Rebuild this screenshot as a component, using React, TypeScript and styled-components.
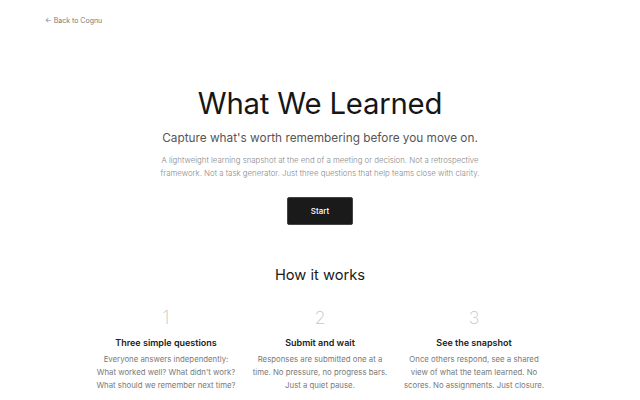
import React from "react";
import styled, { createGlobalStyle } from "styled-components";

const GlobalStyle = createGlobalStyle`
  html, body {
    margin: 0;
    padding: 0;
    background: #ffffff;
  }
  body {
    font-family: Inter, "Noto Sans", Arial, sans-serif;
    color: #1a1a1a;
    -webkit-font-smoothing: antialiased;
  }
`;

const steps = [
  {
    n: "1",
    title: "Three simple questions",
    text: "Everyone answers independently: What worked well? What didn't work? What should we remember next time?",
  },
  {
    n: "2",
    title: "Submit and wait",
    text: "Responses are submitted one at a time. No pressure, no progress bars. Just a quiet pause.",
  },
  {
    n: "3",
    title: "See the snapshot",
    text: "Once others respond, see a shared view of what the team learned. No scores. No assignments. Just closure.",
  },
];

const Page = () => {
  return (
    <>
      <GlobalStyle />
      <Wrap>
        <TopBar>
          <BackLink href="#">← Back to Cognu</BackLink>
        </TopBar>
        <Hero>
          <Title>What We Learned</Title>
          <Subtitle>Capture what's worth remembering before you move on.</Subtitle>
          <Lead>
            A lightweight learning snapshot at the end of a meeting or decision. Not a retrospective
            framework. Not a task generator. Just three questions that help teams close with clarity.
          </Lead>
          <StartButton>Start</StartButton>
        </Hero>
        <How>
          <SectionTitle>How it works</SectionTitle>
          <Steps>
            {steps.map((s) => (
              <Step key={s.n}>
                <StepNumber>{s.n}</StepNumber>
                <StepTitle>{s.title}</StepTitle>
                <StepText>{s.text}</StepText>
              </Step>
            ))}
          </Steps>
        </How>
      </Wrap>
    </>
  );
};

export default Page;

const Wrap = styled.div`
  width: 640px;
  min-height: 400px;
  overflow: hidden;
`;

const TopBar = styled.div`
  padding: 7px 0 0 45px;
  height: 14px;
`;

const BackLink = styled.a`
  font-size: 7px;
  color: #7a7a7a;
  text-decoration: none;
  line-height: 10px;
  &:hover {
    cursor: pointer;
  }
`;

const Hero = styled.section`
  display: flex;
  flex-direction: column;
  align-items: center;
  text-align: center;
  padding-top: 65px;
`;

const Title = styled.h1`
  margin: 0;
  font-size: 29.3px;
  font-weight: 400;
  line-height: 36px;
  letter-spacing: -0.2px;
  color: #161616;
`;

const Subtitle = styled.p`
  margin: 8px 0 0;
  font-size: 11.8px;
  line-height: 16px;
  color: #555;
  font-weight: 400;
`;

const Lead = styled.p`
  margin: 8px 0 0;
  width: 330px;
  font-size: 7.85px;
  line-height: 13px;
  color: #8a8a8a;
  font-weight: 300;
`;

const StartButton = styled.button`
  margin-top: 17px;
  width: 66px;
  height: 28px;
  border: 1px solid #444;
  border-radius: 2px;
  background: #1a1a1a;
  color: #fff;
  font-family: inherit;
  font-size: 8px;
  font-weight: 500;
  &:hover {
    cursor: pointer;
  }
`;

const How = styled.section`
  display: flex;
  flex-direction: column;
  align-items: center;
  padding-top: 40px;
`;

const SectionTitle = styled.h2`
  margin: 0;
  font-size: 14.7px;
  font-weight: 400;
  line-height: 20px;
  color: #1a1a1a;
`;

const Steps = styled.div`
  display: grid;
  grid-template-columns: repeat(3, 144px);
  column-gap: 10px;
  margin-top: 22px;
`;

const Step = styled.div`
  display: flex;
  flex-direction: column;
  align-items: center;
  text-align: center;
`;

const StepNumber = styled.div`
  font-size: 18px;
  font-weight: 200;
  line-height: 22px;
  color: #c8c8c8;
`;

const StepTitle = styled.h3`
  margin: 8px 0 0;
  font-size: 9px;
  font-weight: 600;
  line-height: 12px;
  color: #222;
`;

const StepText = styled.p`
  margin: 4px 0 0;
  font-size: 7.8px;
  line-height: 13px;
  color: #7a7a7a;
  font-weight: 400;
`;
